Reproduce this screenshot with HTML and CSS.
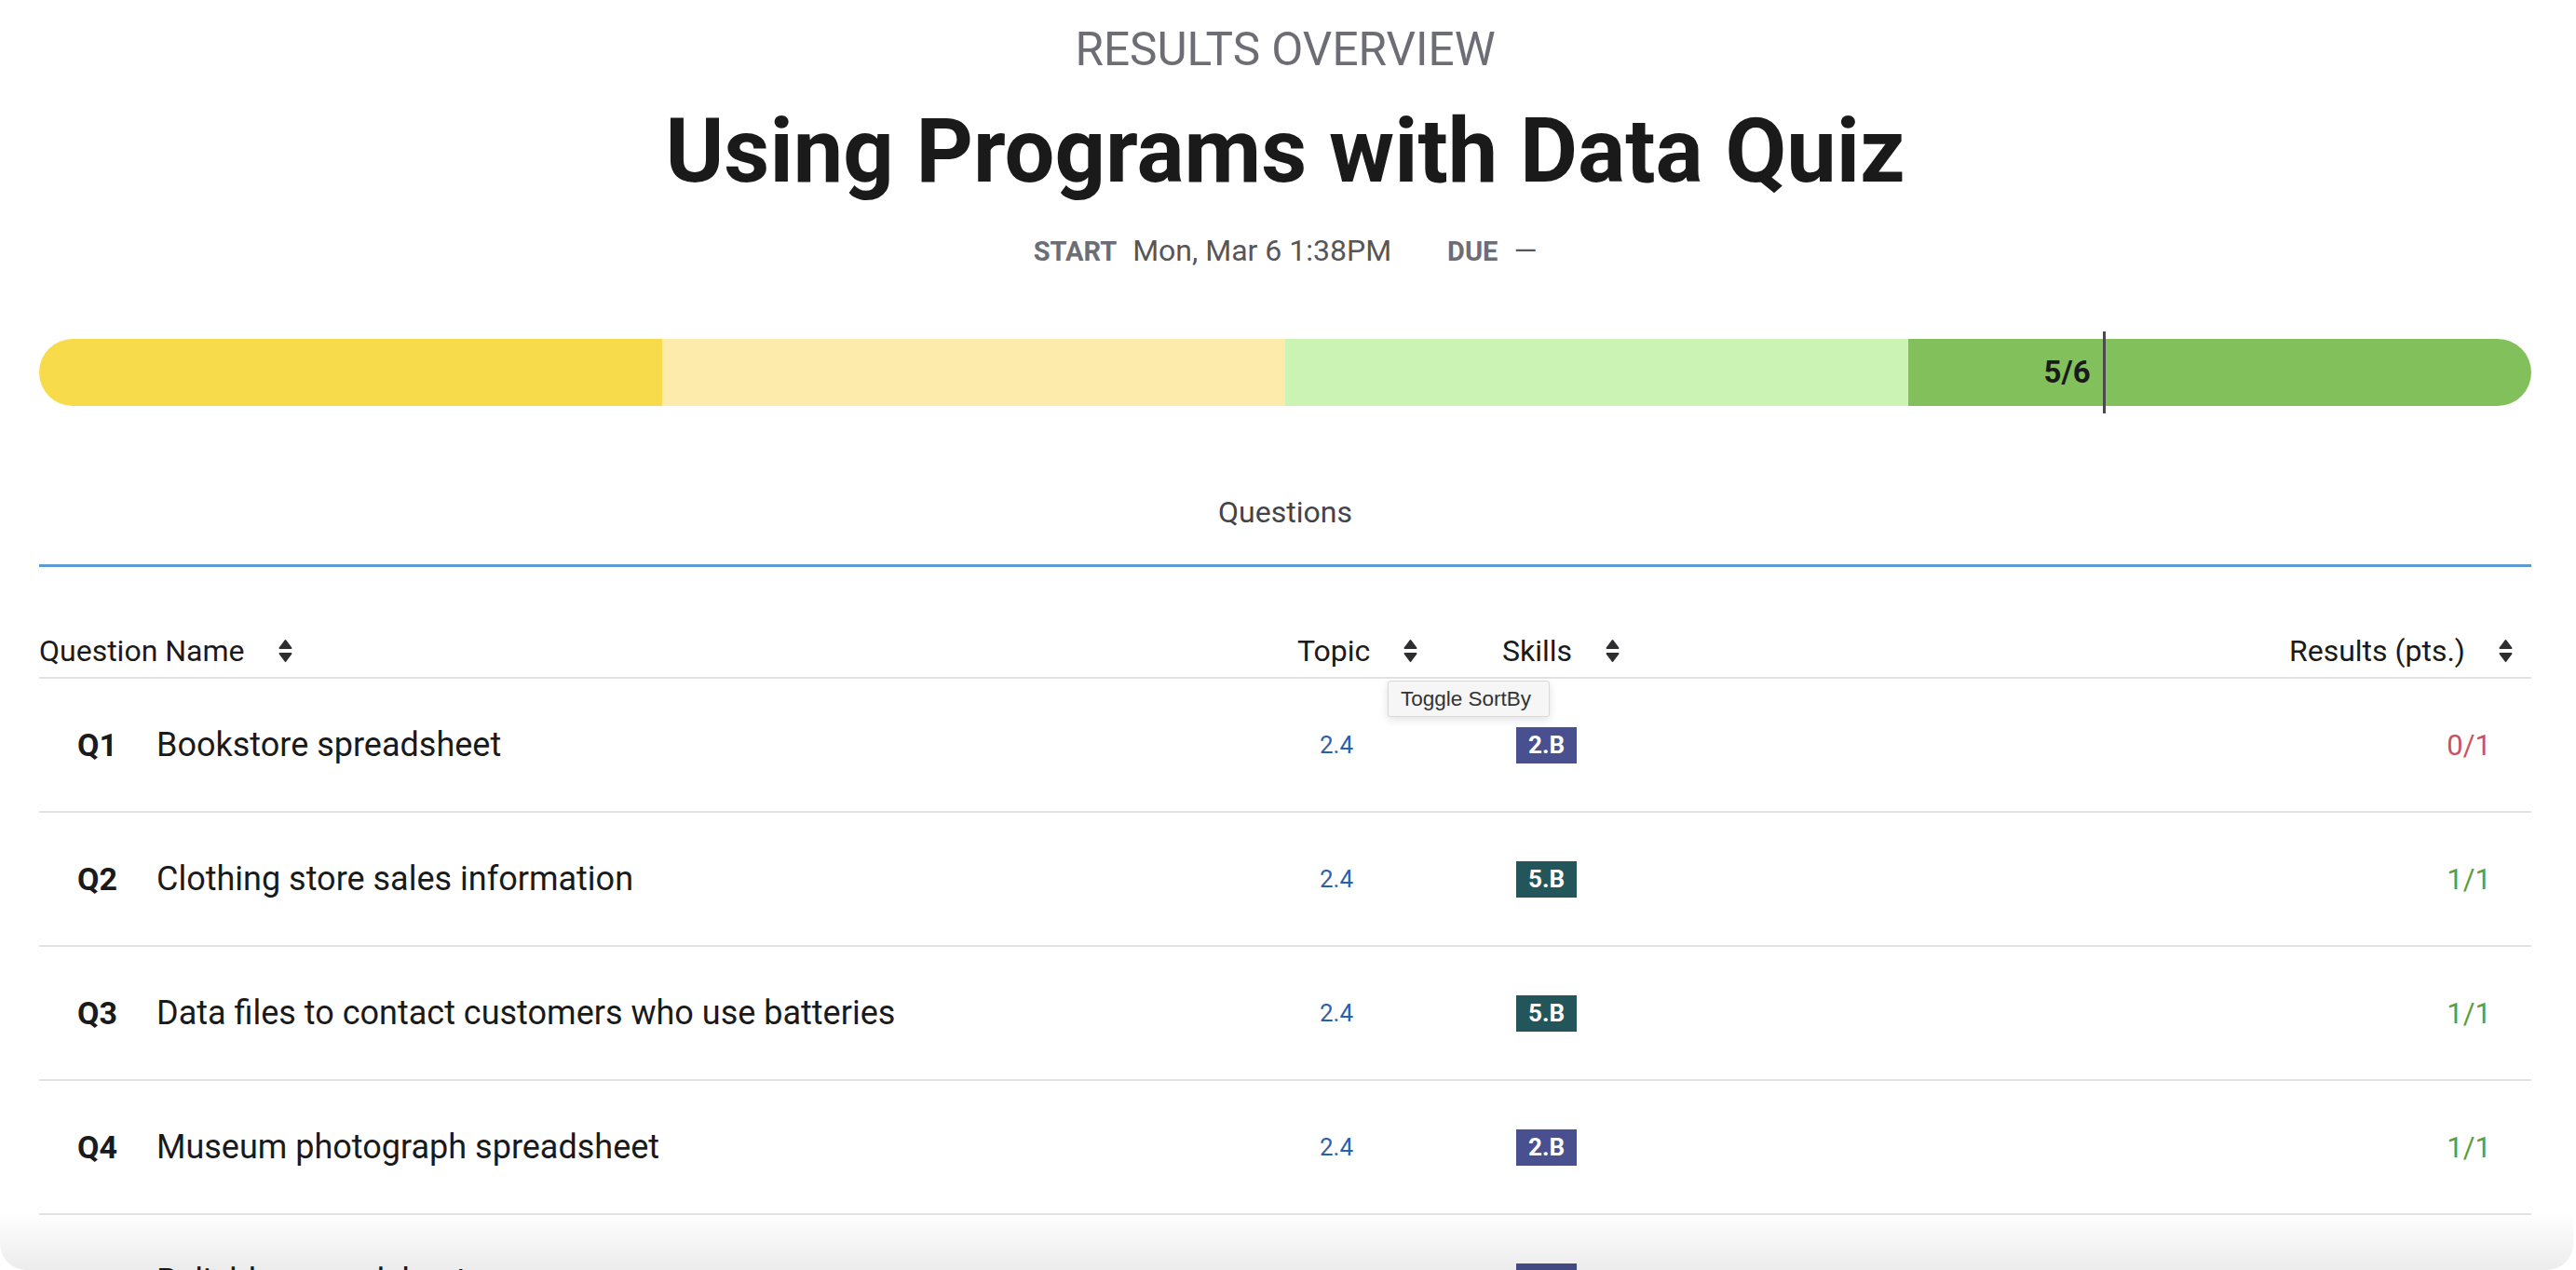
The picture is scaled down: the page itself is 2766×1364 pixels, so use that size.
FILE: index.html
```html
<!DOCTYPE html>
<html lang="en">
<head>
<meta charset="utf-8">
<title>Results Overview</title>
<link rel="stylesheet" href="styles.css">
</head>
<body>
<div class="page">
  <header class="hero">
    <div class="eyebrow">RESULTS OVERVIEW</div>
    <h1 class="title">Using Programs with Data Quiz</h1>
    <div class="meta">
      <span class="meta-label">START</span>
      <span class="meta-value">Mon, Mar 6 1:38PM</span>
      <span class="meta-label due">DUE</span>
      <span class="meta-value">&mdash;</span>
    </div>
  </header>

  <div class="score">
    <div class="score-track">
      <div class="seg seg-1"></div>
      <div class="seg seg-2"></div>
      <div class="seg seg-3"></div>
      <div class="seg seg-4"></div>
    </div>
    <div class="score-mark" style="left: 82.8%;">
      <span class="score-label">5/6</span>
    </div>
  </div>

  <nav class="tabs">
    <div class="tab tab-active">Questions</div>
  </nav>

  <section class="table">
    <div class="thead grid-row">
      <div class="th th-name">Question Name <svg class="sort" viewBox="0 0 15 26"><path d="M7.5 2 L13.5 10 H1.5 Z"/><path d="M1.5 16 H13.5 L7.5 24 Z"/></svg></div>
      <div class="th th-topic">Topic <svg class="sort" viewBox="0 0 15 26"><path d="M7.5 2 L13.5 10 H1.5 Z"/><path d="M1.5 16 H13.5 L7.5 24 Z"/></svg></div>
      <div class="th th-skills">Skills <svg class="sort" viewBox="0 0 15 26"><path d="M7.5 2 L13.5 10 H1.5 Z"/><path d="M1.5 16 H13.5 L7.5 24 Z"/></svg></div>
      <div class="th th-results">Results (pts.) <svg class="sort" viewBox="0 0 15 26"><path d="M7.5 2 L13.5 10 H1.5 Z"/><path d="M1.5 16 H13.5 L7.5 24 Z"/></svg></div>
      <div class="tooltip">Toggle SortBy</div>
    </div>

    <div class="tr grid-row">
      <div class="td td-name"><span class="qnum">Q1</span><span class="qname">Bookstore spreadsheet</span></div>
      <div class="td td-topic">2.4</div>
      <div class="td td-skills"><span class="badge badge-b2">2.B</span></div>
      <div class="td td-results res-wrong">0/1</div>
    </div>
    <div class="tr grid-row">
      <div class="td td-name"><span class="qnum">Q2</span><span class="qname">Clothing store sales information</span></div>
      <div class="td td-topic">2.4</div>
      <div class="td td-skills"><span class="badge badge-b5">5.B</span></div>
      <div class="td td-results res-right">1/1</div>
    </div>
    <div class="tr grid-row">
      <div class="td td-name"><span class="qnum">Q3</span><span class="qname">Data files to contact customers who use batteries</span></div>
      <div class="td td-topic">2.4</div>
      <div class="td td-skills"><span class="badge badge-b5">5.B</span></div>
      <div class="td td-results res-right">1/1</div>
    </div>
    <div class="tr grid-row">
      <div class="td td-name"><span class="qnum">Q4</span><span class="qname">Museum photograph spreadsheet</span></div>
      <div class="td td-topic">2.4</div>
      <div class="td td-skills"><span class="badge badge-b2">2.B</span></div>
      <div class="td td-results res-right">1/1</div>
    </div>
    <div class="tr grid-row">
      <div class="td td-name"><span class="qnum">Q5</span><span class="qname">Reliable spreadsheet</span></div>
      <div class="td td-topic">2.4</div>
      <div class="td td-skills"><span class="badge badge-b2">2.B</span></div>
      <div class="td td-results res-right">1/1</div>
    </div>
  </section>
</div>
<div class="bottom-fade"></div>
</body>
</html>
```
FILE: styles.css
```css
html, body {
  margin: 0;
  padding: 0;
  background: #ffffff;
}
body {
  font-family: Roboto, "Liberation Sans", Arial, sans-serif;
  color: #1a1a1a;
  overflow: hidden;
}
.page {
  padding: 24px 48px 0 42px;
}
.hero {
  display: flex;
  flex-direction: column;
  align-items: center;
}
.eyebrow {
  font-size: 49.5px;
  line-height: 58px;
  color: #6d6d75;
  font-weight: 400;
}
.title {
  margin: 21px 0 0;
  font-size: 95.5px;
  line-height: 118px;
  font-weight: 700;
  color: #1a1a1a;
}
.meta {
  margin-top: 29px;
  display: flex;
  align-items: baseline;
  line-height: 38px;
}
.meta-label {
  font-size: 29px;
  font-weight: 700;
  color: #6d6d75;
  margin-right: 17px;
}
.meta-label.due {
  margin-left: 60px;
}
.meta-value {
  font-size: 32px;
  color: #55555b;
}
.score {
  position: relative;
  margin-top: 75px;
  height: 72px;
}
.score-track {
  display: flex;
  height: 100%;
  border-radius: 36px;
  overflow: hidden;
}
.seg { flex: 1; }
.seg-1 { background: #f8db4b; }
.seg-2 { background: #fcebaa; }
.seg-3 { background: #caf3b4; }
.seg-4 { background: #82c05c; }
.score-mark {
  position: absolute;
  top: -8px;
  bottom: -8px;
  width: 3px;
  background: #4a4a4e;
}
.score-label {
  position: absolute;
  right: 16px;
  top: 50%;
  transform: translateY(-50%);
  font-size: 33px;
  font-weight: 700;
  color: #1a1a1a;
  line-height: 40px;
}
.tabs {
  margin-top: 95px;
  border-bottom: 3px solid #5b9bd5;
  display: flex;
  justify-content: center;
}
.tab {
  font-size: 32px;
  line-height: 38px;
  color: #444448;
  padding-bottom: 37px;
}
.grid-row {
  display: grid;
  grid-template-columns: 1351px 220px 1fr 500px;
  align-items: center;
}
.thead {
  position: relative;
  padding: 70px 0 8px;
  border-bottom: 2px solid #e3e3e3;
  font-size: 32px;
  line-height: 40px;
  color: #1a1a1a;
}
.th {
  display: flex;
  align-items: center;
  gap: 36px;
}
.th-results {
  justify-content: flex-end;
  padding-right: 20px;
}
.sort {
  width: 15px;
  height: 26px;
  fill: #2e2e30;
  stroke: #2e2e30;
  stroke-width: 2;
  stroke-linejoin: round;
}
.tooltip {
  position: absolute;
  left: 1448px;
  top: 122px;
  width: 174px;
  height: 39px;
  box-sizing: border-box;
  padding-left: 13px;
  background: #f6f6f6;
  border: 1px solid #d9d9d9;
  border-radius: 3px;
  box-shadow: 0 3px 10px rgba(0, 0, 0, 0.12);
  font-family: "Liberation Sans", Arial, sans-serif;
  font-size: 22.5px;
  line-height: 37px;
  color: #333333;
  z-index: 2;
}
.tr {
  height: 142px;
  border-bottom: 2px solid #e3e3e3;
}
.td-name {
  padding-left: 41px;
  display: flex;
  align-items: baseline;
  font-size: 36px;
}
.qnum {
  width: 85px;
  font-size: 34px;
  font-weight: 700;
}
.qname {
  color: #1a1a1a;
}
.td-topic {
  padding-left: 24px;
  font-size: 26px;
  color: #2c5fae;
}
.td-skills {
  padding-left: 15px;
}
.badge {
  display: inline-block;
  height: 39px;
  line-height: 39px;
  padding: 0 13px;
  font-size: 26px;
  font-weight: 700;
  color: #ffffff;
}
.badge-b2 { background: #48508f; }
.badge-b5 { background: #23565b; }
.td-results {
  text-align: right;
  padding-right: 43px;
  font-size: 31px;
}
.res-wrong { color: #c9545b; }
.res-right { color: #5a9e3e; }
.bottom-fade {
  position: fixed;
  left: 0;
  right: 3px;
  bottom: 0;
  height: 62px;
  border-radius: 0 0 28px 28px;
  background: linear-gradient(to bottom, rgba(0, 0, 0, 0), rgba(0, 0, 0, 0.075));
  pointer-events: none;
}
```
